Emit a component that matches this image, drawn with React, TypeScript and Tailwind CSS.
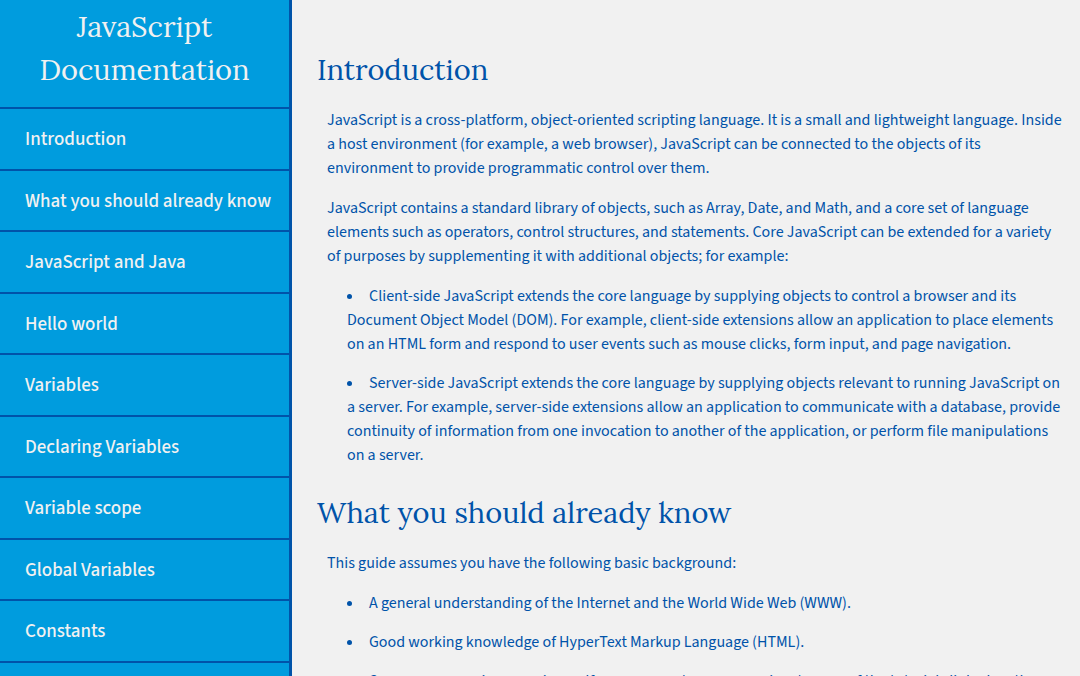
const topics = [
  "Introduction",
  "What you should already know",
  "JavaScript and Java",
  "Hello world",
  "Variables",
  "Declaring Variables",
  "Variable scope",
  "Global Variables",
  "Constants",
  "Data types",
];

type SectionProps = {
  title: string;
  paragraphs: string[];
  items: string[];
};

const sections: SectionProps[] = [
  {
    title: "Introduction",
    paragraphs: [
      "JavaScript is a cross-platform, object-oriented scripting language. It is a small and lightweight language. Inside a host environment (for example, a web browser), JavaScript can be connected to the objects of its environment to provide programmatic control over them.",
      "JavaScript contains a standard library of objects, such as Array, Date, and Math, and a core set of language elements such as operators, control structures, and statements. Core JavaScript can be extended for a variety of purposes by supplementing it with additional objects; for example:",
    ],
    items: [
      "Client-side JavaScript extends the core language by supplying objects to control a browser and its Document Object Model (DOM). For example, client-side extensions allow an application to place elements on an HTML form and respond to user events such as mouse clicks, form input, and page navigation.",
      "Server-side JavaScript extends the core language by supplying objects relevant to running JavaScript on a server. For example, server-side extensions allow an application to communicate with a database, provide continuity of information from one invocation to another of the application, or perform file manipulations on a server.",
    ],
  },
  {
    title: "What you should already know",
    paragraphs: ["This guide assumes you have the following basic background:"],
    items: [
      "A general understanding of the Internet and the World Wide Web (WWW).",
      "Good working knowledge of HyperText Markup Language (HTML).",
      "Some programming experience. If you are new to programming, try one of the tutorials linked on the main page about JavaScript.",
    ],
  },
];

const slug = (title: string) => title.replaceAll(" ", "_");

function Section({ title, paragraphs, items }: SectionProps) {
  return (
    <section id={slug(title)} className="pt-6">
      <h2 className="font-['Lora','Liberation_Serif',serif] text-[29px] leading-[44px] font-normal">{title}</h2>
      <div className="flex flex-col gap-4 pt-4 pl-[10px]">
        {paragraphs.map((text) => (
          <p key={text}>{text}</p>
        ))}
        <ul className="flex list-inside list-disc flex-col gap-[15px] pl-5">
          {items.map((text) => (
            <li key={text}>{text}</li>
          ))}
        </ul>
      </div>
    </section>
  );
}

export default function App() {
  return (
    <div className="flex h-screen overflow-hidden bg-[#f1f1f1] font-['Source_Sans_Pro','Source_Sans_3','Noto_Sans_CJK_JP',sans-serif] text-base leading-6 text-[#0053a9]">
      <nav className="w-[292px] shrink-0 overflow-hidden border-r-3 border-[#0053a9] bg-[#009cde] text-[#f1f1f1]">
        <h1 className="px-6 pt-[5px] pb-4 text-center font-['Lora','Liberation_Serif',serif] text-[29px] leading-[43px] font-normal">
          JavaScript Documentation
        </h1>
        <ul className="text-[19px] leading-normal font-medium">
          {topics.map((topic) => (
            <li key={topic} className="border-t-2 border-[#0053a9]">
              <a href={"#" + slug(topic)} className="block pt-[17px] pb-[14px] pl-[25px]">
                {topic}
              </a>
            </li>
          ))}
        </ul>
      </nav>
      <main className="min-w-0 flex-1 overflow-hidden pt-6 pr-4 pl-[25px]">
        {sections.map((section) => (
          <Section key={section.title} {...section} />
        ))}
      </main>
    </div>
  );
}
